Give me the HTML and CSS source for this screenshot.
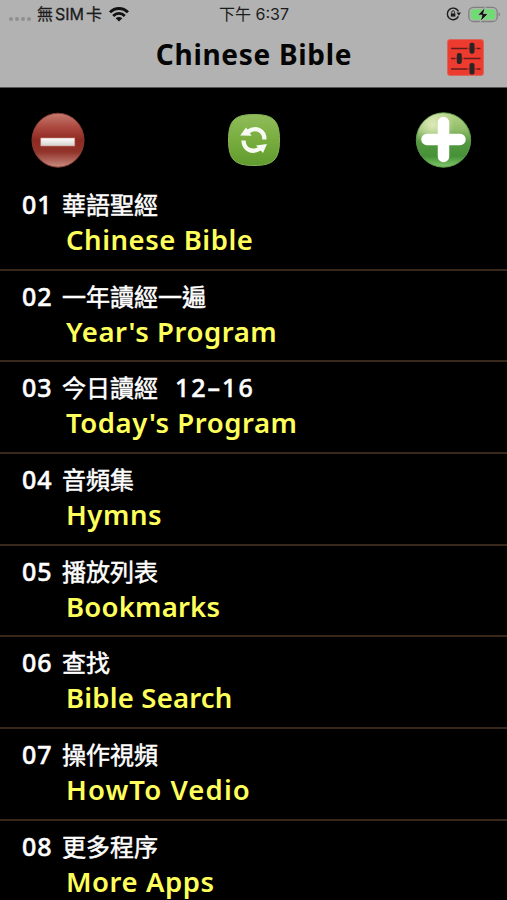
FILE: index.html
```html
<!DOCTYPE html>
<html lang="zh-Hant">
<head>
<meta charset="UTF-8">
<meta name="viewport" content="width=device-width, initial-scale=1.0">
<title>Chinese Bible</title>
<link rel="stylesheet" href="styles.css">
</head>
<body>
<header class="header">
    <div class="status">
        <div class="carrier">
            <span class="dots"><i></i><i></i><i></i><i></i></span>
            <span class="sim">無<b>SIM</b>卡</span>
            <svg class="wifi" width="20" height="15" viewBox="0 0 20 15" fill="none" stroke="#111" stroke-width="2.8">
                <path d="M1 5.3C6 .2 14 .2 19 5.3M4.2 8.9C7.5 5.5 12.5 5.5 15.8 8.9"/>
                <path d="M10 14.4L6.7 11.3C8.6 9.7 11.4 9.7 13.3 11.3Z" fill="#111" stroke="none"/>
            </svg>
        </div>
        <div class="time">下午 <b>6:37</b></div>
        <div class="power">
            <svg width="15" height="14" viewBox="0 0 15 14">
                <path d="M12.4 9.4A5.8 5.8 0 1 1 12.4 4.4" fill="none" stroke="#1c1c1c" stroke-width="1.4"/>
                <path d="M10.5 5.5H15L12.8 8.8Z" fill="#1c1c1c"/>
                <path d="M4.8 6.4H9.4V9.6H4.8Z" fill="#1c1c1c"/>
                <path d="M5.7 6.5V5.2A1.4 1.5 0 0 1 8.5 5.2V6.5" fill="none" stroke="#1c1c1c" stroke-width=".9"/>
            </svg>
            <svg width="33" height="17" viewBox="0 0 33 17">
                <rect x=".8" y="1.3" width="28.4" height="14.2" rx="4.6" fill="none" stroke="#808080" stroke-width="1.3"/>
                <rect x="2.8" y="3.2" width="24.4" height="10.4" rx="2.8" fill="#6fdc73"/>
                <path d="M30.7 6.2Q33.6 8.4 30.7 10.6Z" fill="#808080"/>
                <path d="M17.2 1.2L9.5 9.2H14L12.2 15.8L20.3 7.6H15.6Z" fill="#111" stroke="#b2d5b3" stroke-width=".8"/>
            </svg>
        </div>
    </div>
    <div class="titlebar">
        <h1>Chinese Bible</h1>
        <svg class="settings" width="38" height="37" viewBox="0 0 38 37">
            <rect x=".5" y=".5" width="36" height="36" rx="2.5" fill="#ee3b30" stroke="#d8675f"/>
            <path d="M4 9.5H20M30 9.5H33.5M4 19.5H8M17 19.5H33.5M4 30H20M30 30H33.5" stroke="#631d19" stroke-width="1.6"/>
            <path d="M20 9.5H30M8 19.5H17M20 30H30" stroke="#b32d25" stroke-width="1.4"/>
            <g fill="#2c2424">
                <rect x="22.5" y="3.8" width="5" height="11" rx="2"/>
                <rect x="9.8" y="14" width="5" height="11" rx="2"/>
                <rect x="22.5" y="24" width="5" height="11.5" rx="2"/>
            </g>
        </svg>
    </div>
</header>

<div class="toolbar">
    <svg width="56" height="57" viewBox="0 0 56 57">
        <defs>
            <linearGradient id="red" x2="0" y2="1">
                <stop offset="0" stop-color="#c57c6f"/>
                <stop offset=".25" stop-color="#ad4a41"/>
                <stop offset=".5" stop-color="#8e2920"/>
                <stop offset=".72" stop-color="#92342b"/>
                <stop offset="1" stop-color="#c98c82"/>
            </linearGradient>
            <linearGradient id="bar" x2="0" y2="1">
                <stop offset="0" stop-color="#fff"/>
                <stop offset="1" stop-color="#d3d1cd"/>
            </linearGradient>
        </defs>
        <ellipse cx="28" cy="28.2" rx="26" ry="27" fill="url(#red)" stroke="#803b33"/>
        <rect x="10.8" y="26" width="34" height="8" fill="url(#bar)" stroke="#c98a82" stroke-width=".6"/>
    </svg>
    <svg class="refresh" width="52" height="52" viewBox="0 0 52 52">
        <defs>
            <linearGradient id="leaf" x2="0" y2="1">
                <stop offset="0" stop-color="#91bc5b"/>
                <stop offset=".5" stop-color="#78ad3e"/>
                <stop offset="1" stop-color="#609b2e"/>
            </linearGradient>
        </defs>
        <path d="M26 .5C45 .5 51.5 6 51.5 26S45 51.5 26 51.5S.5 46 .5 26S7 .5 26 .5Z" fill="url(#leaf)" stroke="#86b356"/>
        <path d="M20 17.6C28 12.2 36.5 16.5 36.4 25.5M15.5 26.5C15.8 35.5 24 39.5 32 34.5" fill="none" stroke="#f7faf3" stroke-width="4.3"/>
        <path d="M12.2 21.5L18 13.5L23.6 21.8Z M28 31.5L39 30L35 39Z" fill="#f7faf3"/>
    </svg>
    <svg width="57" height="57" viewBox="0 0 57 57">
        <defs>
            <linearGradient id="green" x2="0" y2="1">
                <stop offset="0" stop-color="#b5d487"/>
                <stop offset=".3" stop-color="#92be6b"/>
                <stop offset=".55" stop-color="#529740"/>
                <stop offset=".8" stop-color="#469237"/>
                <stop offset="1" stop-color="#82c96c"/>
            </linearGradient>
            <radialGradient id="shine" cx=".3" cy=".22" r=".4">
                <stop offset="0" stop-color="#eff3ca" stop-opacity=".8"/>
                <stop offset="1" stop-color="#eff3ca" stop-opacity="0"/>
            </radialGradient>
        </defs>
        <circle cx="28.5" cy="28" r="27.2" fill="url(#green)" stroke="#5b9948"/>
        <circle cx="28.5" cy="28" r="27" fill="url(#shine)"/>
        <path d="M28.5 10.5V44.5M12 27.5H45" stroke="#fff" stroke-width="11.5" stroke-linecap="round"/>
    </svg>
</div>

<ul class="menu">
    <li>
        <div class="zh"><span>01</span>華語聖經</div>
        <div class="en">Chinese Bible</div>
    </li>
    <li>
        <div class="zh"><span>02</span>一年讀經一遍</div>
        <div class="en">Year's Program</div>
    </li>
    <li>
        <div class="zh"><span>03</span>今日讀經<span class="date">12–16</span></div>
        <div class="en">Today's Program</div>
    </li>
    <li>
        <div class="zh"><span>04</span>音頻集</div>
        <div class="en">Hymns</div>
    </li>
    <li>
        <div class="zh"><span>05</span>播放列表</div>
        <div class="en tight">Bookmarks</div>
    </li>
    <li>
        <div class="zh"><span>06</span>查找</div>
        <div class="en tight">Bible Search</div>
    </li>
    <li>
        <div class="zh"><span>07</span>操作視頻</div>
        <div class="en wide">HowTo Vedio</div>
    </li>
    <li>
        <div class="zh"><span>08</span>更多程序</div>
        <div class="en">More Apps</div>
    </li>
</ul>
</body>
</html>
```
FILE: styles.css
```css
* {
    box-sizing: border-box;
}
body {
    margin: 0;
    height: 900px;
    overflow: hidden;
    background: #000;
    font-family: "Noto Sans", "Noto Sans CJK TC", sans-serif;
}
svg {
    display: block;
}

/* Status bar and title */
.header {
    height: 88px;
    background: #b2b2b2;
    border-bottom: 1px solid #555;
}
.status {
    display: grid;
    grid-template-columns: 1fr 72px 1fr;
    align-items: center;
    height: 28px;
    padding: 0 6px 0 9px;
    font: 16px/28px Inter, "Noto Sans CJK TC", sans-serif;
    color: #1c1c1c;
}
.status b {
    font-weight: 400;
}
.carrier, .power, .dots {
    display: flex;
    align-items: center;
}
.carrier {
    -webkit-text-stroke: 0.3px #1c1c1c;
}
.dots {
    gap: 2px;
    padding-top: 10px;
}
.dots i {
    width: 4px;
    height: 4px;
    border-radius: 50%;
    background: #8f8f8f;
}
.sim {
    margin-left: 6px;
    white-space: nowrap;
}
.sim b {
    margin: 0 2px;
}
.wifi {
    margin-left: 7px;
}
.time {
    white-space: nowrap;
}
.power {
    justify-content: flex-end;
    gap: 7px;
}
.titlebar {
    display: grid;
    grid-template-columns: 1fr auto 1fr;
    align-items: center;
    height: 59px;
    padding: 0 22px 0 23px;
}
h1 {
    grid-column: 2;
    margin: 0;
    padding-bottom: 6px;
    font-size: 28px;
    line-height: 53px;
    font-weight: 700;
    letter-spacing: 0.7px;
    color: #050505;
}
.settings {
    justify-self: end;
}

/* Round buttons */
.toolbar {
    display: flex;
    justify-content: space-between;
    align-items: center;
    height: 91px;
    padding: 13px 35px 0 30px;
}
.refresh {
    margin-left: 6px;
}

/* Menu list */
.menu {
    list-style: none;
    margin: 0;
    padding: 0;
}
.menu li {
    height: 91.7px;
    padding: 8px 0 0 22px;
    border-bottom: 2px solid #38281b;
}
.zh {
    display: flex;
    height: 36px;
    font-size: 24px;
    line-height: 36px;
    color: #fff;
    -webkit-text-stroke: 0.5px #fff;
}
.zh span {
    width: 40px;
    font-size: 25px;
    line-height: 34px;
    font-weight: 500;
    letter-spacing: 0.9px;
}
.zh .date {
    width: auto;
    margin-left: 17px;
    letter-spacing: 2px;
}
.en {
    height: 34px;
    padding-left: 44px;
    font-size: 27.5px;
    line-height: 34px;
    font-weight: 600;
    letter-spacing: 0.55px;
    color: #ffff5c;
}
.tight {
    letter-spacing: 0.2px;
}
.wide {
    letter-spacing: 1.1px;
}
```
